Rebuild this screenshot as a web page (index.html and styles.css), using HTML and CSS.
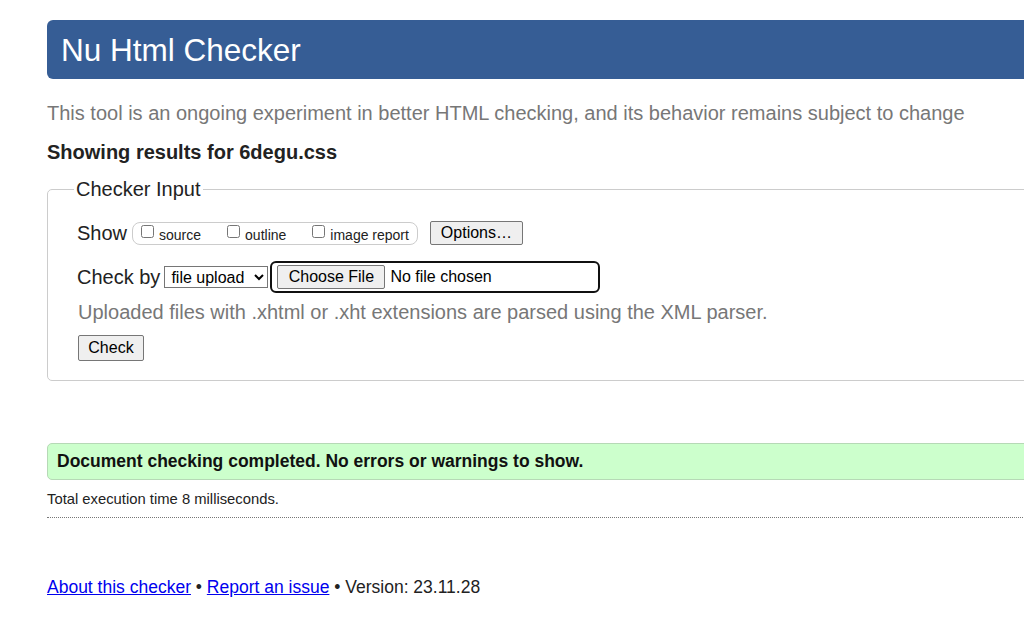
FILE: index.html
```html
<!DOCTYPE html>
<html lang="en">
<head>
<meta charset="utf-8">
<title>Nu Html Checker</title>
<link rel="stylesheet" href="styles.css">
</head>
<body>
<div class="page">
  <h1 class="title">Nu Html Checker</h1>
  <p class="intro">This tool is an ongoing experiment in better HTML checking, and its behavior remains subject to change</p>
  <p class="showing">Showing results for 6degu.css</p>
  <fieldset class="input">
    <legend class="legend">Checker Input</legend>
    <div class="row show-row">
      <span class="label">Show</span>
      <span class="opts">
        <label class="opt"><input type="checkbox" class="cb"><span>source</span></label>
        <label class="opt"><input type="checkbox" class="cb"><span>outline</span></label>
        <label class="opt"><input type="checkbox" class="cb"><span>image report</span></label>
      </span>
      <button class="btn options">Options…</button>
    </div>
    <div class="row check-row">
      <span class="label">Check by</span>
      <select class="sel"><option>file upload</option></select>
      <span class="file"><span class="btn filebtn">Choose File</span><span class="nofile">No file chosen</span></span>
    </div>
    <p class="hint">Uploaded files with .xhtml or .xht extensions are parsed using the XML parser.</p>
    <button class="btn check">Check</button>
  </fieldset>
  <p class="success">Document checking completed. No errors or warnings to show.</p>
  <p class="stats">Total execution time 8 milliseconds.</p>
  <p class="footer"><a href="#">About this checker</a> • <a href="#">Report an issue</a> • Version: 23.11.28</p>
</div>
</body>
</html>
```
FILE: styles.css
```css
html, body {
  margin: 0;
  padding: 0;
  background: #fff;
  overflow: hidden;
}
body {
  font-family: "Liberation Sans", Arial, sans-serif;
  color: #222;
  width: 1024px;
  height: 640px;
}
.page {
  padding: 20px 0 0 47px;
  width: 1060px;
}
.title {
  margin: 0;
  background: #365d95;
  color: #fff;
  font-weight: normal;
  font-size: 31.5px;
  line-height: 60px;
  height: 59px;
  padding-left: 14px;
  border-radius: 6px 0 0 6px;
}
.intro {
  margin: 22px 0 0 0;
  font-size: 20px;
  line-height: 24px;
  color: #777;
}
.showing {
  margin: 15px 0 0 0;
  font-size: 20px;
  line-height: 24px;
  font-weight: bold;
  color: #222;
}
.input {
  margin: 14px 0 0 0;
  border: 1px solid #ccc;
  border-radius: 5px 0 0 5px;
  padding: 20px 0 19px 30px;
  min-width: 0;
}
.legend {
  font-size: 20px;
  padding: 0 2px;
  margin-left: -4px;
  color: #222;
}
.row {
  display: flex;
  align-items: center;
}
.label {
  font-size: 20px;
  color: #222;
}
.show-row {
  height: 24px;
  margin-left: -1px;
}
.opts {
  display: flex;
  align-items: center;
  margin-left: 5px;
  height: 21px;
  border: 1px solid #ccc;
  border-radius: 8px;
  padding: 0 8px 0 8px;
}
.opt {
  display: flex;
  align-items: center;
  font-size: 14px;
  color: #222;
}
.opt + .opt {
  margin-left: 26px;
}
.cb {
  width: 13px;
  height: 13px;
  margin: 0 5px 3px 0;
}
.opt span {
  padding-top: 3px;
}
.btn {
  font-family: "Liberation Sans", Arial, sans-serif;
  font-size: 16px;
  color: #000;
  background: #efefef;
  border: 1px solid #767676;
  border-radius: 2px;
  padding: 0 9px;
  height: 24px;
  line-height: 22px;
  box-sizing: border-box;
}
.options {
  margin-left: 12px;
  width: 93px;
  padding: 0;
}
.check-row {
  margin-top: 16px;
  height: 32px;
  margin-left: -1px;
}
.sel {
  margin-left: 4px;
  width: 104px;
  height: 22px;
  font-family: "Liberation Sans", Arial, sans-serif;
  font-size: 16px;
  color: #000;
  border: 1px solid #767676;
  border-radius: 0;
  background: #fff;
  padding: 0 0 0 2px;
}
.file {
  display: flex;
  align-items: center;
  margin-left: 2px;
  width: 330px;
  height: 32px;
  box-sizing: border-box;
  border: 2px solid #101010;
  border-radius: 6px;
  padding-left: 5px;
}
.filebtn {
  display: inline-flex;
  align-items: center;
  width: 108px;
  height: 24px;
  justify-content: center;
  padding: 0;
}
.nofile {
  margin-left: 5px;
  font-size: 16px;
  color: #000;
}
.hint {
  margin: 7px 0 0 0;
  font-size: 20px;
  line-height: 24px;
  color: #777;
}
.check {
  margin-top: 11px;
  width: 66px;
  height: 26px;
  padding: 0;
}
.success {
  margin: 62px 0 0 0;
  background: #ccffcc;
  border: 1px solid #b6d9b6;
  border-radius: 5px 0 0 5px;
  height: 35px;
  line-height: 35px;
  padding-left: 9px;
  font-size: 17.5px;
  font-weight: bold;
  color: #111;
}
.stats {
  margin: 11px 0 0 0;
  font-size: 14.8px;
  line-height: 17px;
  color: #222;
  padding-bottom: 9px;
  border-bottom: 1px dotted #777;
}
.footer {
  margin: 58px 0 0 0;
  font-size: 17.5px;
  line-height: 22px;
  color: #222;
}
.footer a {
  color: #0000ee;
  text-decoration: underline;
}
```
